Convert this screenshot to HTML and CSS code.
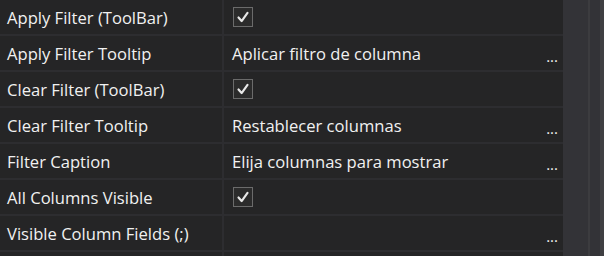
FILE: index.html
```html
<!DOCTYPE html>
<html>
	<head>
		<title>Properties</title>
		<link rel="stylesheet" href="styles.css">
	</head>
	<body>
		<div class="panel">
			<div class="grid">
				<div class="name">Apply Filter (ToolBar)</div>
				<div class="value"><span class="check"><svg viewBox="0 0 20 20"><path d="M5 10.5 L8.5 14.5 L15 5.5"/></svg></span></div>

				<div class="name">Apply Filter Tooltip</div>
				<div class="value"><span class="text">Aplicar filtro de columna</span><span class="more">...</span></div>

				<div class="name">Clear Filter (ToolBar)</div>
				<div class="value"><span class="check"><svg viewBox="0 0 20 20"><path d="M5 10.5 L8.5 14.5 L15 5.5"/></svg></span></div>

				<div class="name">Clear Filter Tooltip</div>
				<div class="value"><span class="text">Restablecer columnas</span><span class="more">...</span></div>

				<div class="name">Filter Caption</div>
				<div class="value"><span class="text">Elija columnas para mostrar</span><span class="more">...</span></div>

				<div class="name">All Columns Visible</div>
				<div class="value"><span class="check"><svg viewBox="0 0 20 20"><path d="M5 10.5 L8.5 14.5 L15 5.5"/></svg></span></div>

				<div class="name">Visible Column Fields (;)</div>
				<div class="value"><span class="text"></span><span class="more">...</span></div>

				<div class="name"></div>
				<div class="value"></div>
			</div>
			<div class="scroll">
				<div class="track"></div>
				<div class="edge"></div>
			</div>
		</div>
	</body>
</html>
```

FILE: styles.css
```css
html, body {padding: 0px; margin: 0px; background: #2d2d30;}
body {width: 604px; height: 256px; overflow: hidden; font-family: "Open Sans", "Noto Sans", sans-serif; font-size: 16.6px; color: #f1f1f1;}
.panel {display: flex; height: 256px; overflow: hidden;}
.grid {display: grid; grid-template-columns: 222px 341px; grid-auto-rows: 34px; column-gap: 2px; row-gap: 2px; background: #2d2d30; width: 563px;}
.name, .value {background: #252526; display: flex; align-items: center;}
.name {padding-left: 7px;}
.value {padding-left: 8px; padding-right: 7px; justify-content: space-between;}
.check {display: block; width: 18px; height: 18px; border: 1px solid #6b6b6b; background: #2b2b2b; margin-left: 1px;}
.check svg {display: block; width: 18px; height: 18px; fill: none; stroke: #e8e8e8; stroke-width: 2.4; stroke-linecap: round; stroke-linejoin: round;}
.more {align-self: flex-end; padding-bottom: 9px; line-height: 10px; font-size: 15px;}
.scroll {display: flex; flex: 1;}
.track {width: 25px; background: #333337; border-right: 2px solid #3c3c3f;}
.edge {flex: 1; background: #333337; border-right: 4px solid #3f3f42;}
```
